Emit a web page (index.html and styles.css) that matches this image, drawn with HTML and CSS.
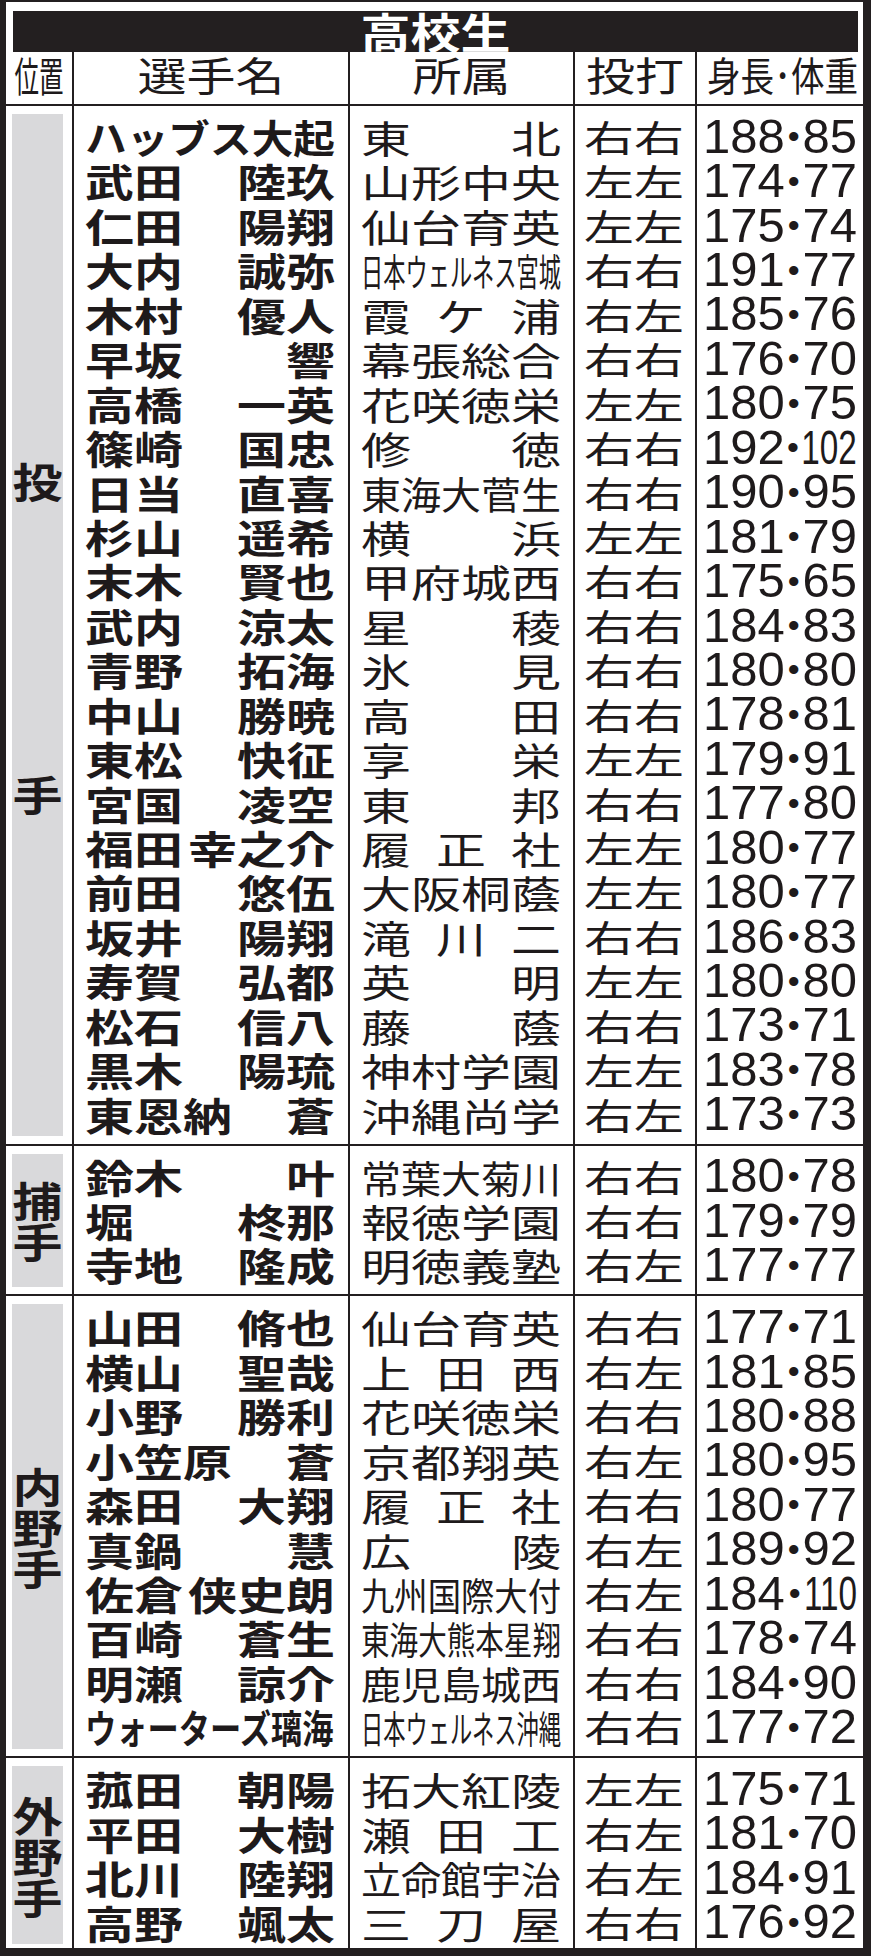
FILE: index.html
```html
<!DOCTYPE html>
<html lang="ja">
<head>
<meta charset="utf-8">
<title>高校生</title>
<link rel="stylesheet" href="styles.css">
</head>
<body>
<div class="frame">
  <div class="title"><span>高校生</span></div>
  <div class="head">
    <div class="c pos"><span class="hpos">位置</span></div>
    <div class="c name"><span class="ht">選手名</span></div>
    <div class="c school"><span class="ht">所属</span></div>
    <div class="c hand"><span class="ht">投打</span></div>
    <div class="c num"><span class="hnum">身長･体重</span></div>
  </div>

  <section class="sec">
    <div class="col pos"><div class="gray pitcher"><span>投</span><span>手</span></div></div>
    <div class="col name">
      <div class="r"><span class="n6">ハッブス大起</span></div>
      <div class="r"><span>武田</span><span>陸玖</span></div>
      <div class="r"><span>仁田</span><span>陽翔</span></div>
      <div class="r"><span>大内</span><span>誠弥</span></div>
      <div class="r"><span>木村</span><span>優人</span></div>
      <div class="r"><span>早坂</span><span>響</span></div>
      <div class="r"><span>高橋</span><span>一英</span></div>
      <div class="r"><span>篠崎</span><span>国忠</span></div>
      <div class="r"><span>日当</span><span>直喜</span></div>
      <div class="r"><span>杉山</span><span>遥希</span></div>
      <div class="r"><span>末木</span><span>賢也</span></div>
      <div class="r"><span>武内</span><span>涼太</span></div>
      <div class="r"><span>青野</span><span>拓海</span></div>
      <div class="r"><span>中山</span><span>勝暁</span></div>
      <div class="r"><span>東松</span><span>快征</span></div>
      <div class="r"><span>宮国</span><span>凌空</span></div>
      <div class="r"><span>福田</span><span>幸之介</span></div>
      <div class="r"><span>前田</span><span>悠伍</span></div>
      <div class="r"><span>坂井</span><span>陽翔</span></div>
      <div class="r"><span>寿賀</span><span>弘都</span></div>
      <div class="r"><span>松石</span><span>信八</span></div>
      <div class="r"><span>黒木</span><span>陽琉</span></div>
      <div class="r"><span>東恩納</span><span>蒼</span></div>
    </div>
    <div class="col school">
      <div class="r"><span>東</span><span>北</span></div>
      <div class="r"><span>山形中央</span></div>
      <div class="r"><span>仙台育英</span></div>
      <div class="r"><span class="s9">日本ウェルネス宮城</span></div>
      <div class="r"><span>霞</span><span>ケ</span><span>浦</span></div>
      <div class="r"><span>幕張総合</span></div>
      <div class="r"><span>花咲徳栄</span></div>
      <div class="r"><span>修</span><span>徳</span></div>
      <div class="r"><span class="s5">東海大菅生</span></div>
      <div class="r"><span>横</span><span>浜</span></div>
      <div class="r"><span>甲府城西</span></div>
      <div class="r"><span>星</span><span>稜</span></div>
      <div class="r"><span>氷</span><span>見</span></div>
      <div class="r"><span>高</span><span>田</span></div>
      <div class="r"><span>享</span><span>栄</span></div>
      <div class="r"><span>東</span><span>邦</span></div>
      <div class="r"><span>履</span><span>正</span><span>社</span></div>
      <div class="r"><span>大阪桐蔭</span></div>
      <div class="r"><span>滝</span><span>川</span><span>二</span></div>
      <div class="r"><span>英</span><span>明</span></div>
      <div class="r"><span>藤</span><span>蔭</span></div>
      <div class="r"><span>神村学園</span></div>
      <div class="r"><span>沖縄尚学</span></div>
    </div>
    <div class="col hand">
      <div class="r">右右</div><div class="r">左左</div><div class="r">左左</div><div class="r">右右</div>
      <div class="r">右左</div><div class="r">右右</div><div class="r">左左</div><div class="r">右右</div>
      <div class="r">右右</div><div class="r">左左</div><div class="r">右右</div><div class="r">右右</div>
      <div class="r">右右</div><div class="r">右右</div><div class="r">左左</div><div class="r">右右</div>
      <div class="r">左左</div><div class="r">左左</div><div class="r">右右</div><div class="r">左左</div>
      <div class="r">右右</div><div class="r">左左</div><div class="r">右左</div>
    </div>
    <div class="col num">
      <div class="r"><span>188</span><span class="dot">•</span><span>85</span></div>
      <div class="r"><span>174</span><span class="dot">•</span><span>77</span></div>
      <div class="r"><span>175</span><span class="dot">•</span><span>74</span></div>
      <div class="r"><span>191</span><span class="dot">•</span><span>77</span></div>
      <div class="r"><span>185</span><span class="dot">•</span><span>76</span></div>
      <div class="r"><span>176</span><span class="dot">•</span><span>70</span></div>
      <div class="r"><span>180</span><span class="dot">•</span><span>75</span></div>
      <div class="r"><span>192</span><span class="dot">•</span><span class="w3">102</span></div>
      <div class="r"><span>190</span><span class="dot">•</span><span>95</span></div>
      <div class="r"><span>181</span><span class="dot">•</span><span>79</span></div>
      <div class="r"><span>175</span><span class="dot">•</span><span>65</span></div>
      <div class="r"><span>184</span><span class="dot">•</span><span>83</span></div>
      <div class="r"><span>180</span><span class="dot">•</span><span>80</span></div>
      <div class="r"><span>178</span><span class="dot">•</span><span>81</span></div>
      <div class="r"><span>179</span><span class="dot">•</span><span>91</span></div>
      <div class="r"><span>177</span><span class="dot">•</span><span>80</span></div>
      <div class="r"><span>180</span><span class="dot">•</span><span>77</span></div>
      <div class="r"><span>180</span><span class="dot">•</span><span>77</span></div>
      <div class="r"><span>186</span><span class="dot">•</span><span>83</span></div>
      <div class="r"><span>180</span><span class="dot">•</span><span>80</span></div>
      <div class="r"><span>173</span><span class="dot">•</span><span>71</span></div>
      <div class="r"><span>183</span><span class="dot">•</span><span>78</span></div>
      <div class="r"><span>173</span><span class="dot">•</span><span>73</span></div>
    </div>
  </section>

  <section class="sec">
    <div class="col pos"><div class="gray"><span>捕</span><span>手</span></div></div>
    <div class="col name">
      <div class="r"><span>鈴木</span><span>叶</span></div>
      <div class="r"><span>堀</span><span>柊那</span></div>
      <div class="r"><span>寺地</span><span>隆成</span></div>
    </div>
    <div class="col school">
      <div class="r"><span class="s5">常葉大菊川</span></div>
      <div class="r"><span>報徳学園</span></div>
      <div class="r"><span>明徳義塾</span></div>
    </div>
    <div class="col hand">
      <div class="r">右右</div><div class="r">右右</div><div class="r">右左</div>
    </div>
    <div class="col num">
      <div class="r"><span>180</span><span class="dot">•</span><span>78</span></div>
      <div class="r"><span>179</span><span class="dot">•</span><span>79</span></div>
      <div class="r"><span>177</span><span class="dot">•</span><span>77</span></div>
    </div>
  </section>

  <section class="sec">
    <div class="col pos"><div class="gray"><span>内</span><span>野</span><span>手</span></div></div>
    <div class="col name">
      <div class="r"><span>山田</span><span>脩也</span></div>
      <div class="r"><span>横山</span><span>聖哉</span></div>
      <div class="r"><span>小野</span><span>勝利</span></div>
      <div class="r"><span>小笠原</span><span>蒼</span></div>
      <div class="r"><span>森田</span><span>大翔</span></div>
      <div class="r"><span>真鍋</span><span>慧</span></div>
      <div class="r"><span>佐倉</span><span>侠史朗</span></div>
      <div class="r"><span>百崎</span><span>蒼生</span></div>
      <div class="r"><span>明瀬</span><span>諒介</span></div>
      <div class="r"><span class="n8">ウォーターズ璃海</span></div>
    </div>
    <div class="col school">
      <div class="r"><span>仙台育英</span></div>
      <div class="r"><span>上</span><span>田</span><span>西</span></div>
      <div class="r"><span>花咲徳栄</span></div>
      <div class="r"><span>京都翔英</span></div>
      <div class="r"><span>履</span><span>正</span><span>社</span></div>
      <div class="r"><span>広</span><span>陵</span></div>
      <div class="r"><span class="s6">九州国際大付</span></div>
      <div class="r"><span class="s7">東海大熊本星翔</span></div>
      <div class="r"><span class="s5">鹿児島城西</span></div>
      <div class="r"><span class="s9">日本ウェルネス沖縄</span></div>
    </div>
    <div class="col hand">
      <div class="r">右右</div><div class="r">右左</div><div class="r">右右</div><div class="r">右左</div>
      <div class="r">右右</div><div class="r">右左</div><div class="r">右左</div><div class="r">右右</div>
      <div class="r">右右</div><div class="r">右右</div>
    </div>
    <div class="col num">
      <div class="r"><span>177</span><span class="dot">•</span><span>71</span></div>
      <div class="r"><span>181</span><span class="dot">•</span><span>85</span></div>
      <div class="r"><span>180</span><span class="dot">•</span><span>88</span></div>
      <div class="r"><span>180</span><span class="dot">•</span><span>95</span></div>
      <div class="r"><span>180</span><span class="dot">•</span><span>77</span></div>
      <div class="r"><span>189</span><span class="dot">•</span><span>92</span></div>
      <div class="r"><span>184</span><span class="dot">•</span><span class="w3">110</span></div>
      <div class="r"><span>178</span><span class="dot">•</span><span>74</span></div>
      <div class="r"><span>184</span><span class="dot">•</span><span>90</span></div>
      <div class="r"><span>177</span><span class="dot">•</span><span>72</span></div>
    </div>
  </section>

  <section class="sec last">
    <div class="col pos"><div class="gray"><span>外</span><span>野</span><span>手</span></div></div>
    <div class="col name">
      <div class="r"><span>菰田</span><span>朝陽</span></div>
      <div class="r"><span>平田</span><span>大樹</span></div>
      <div class="r"><span>北川</span><span>陸翔</span></div>
      <div class="r"><span>高野</span><span>颯太</span></div>
    </div>
    <div class="col school">
      <div class="r"><span>拓大紅陵</span></div>
      <div class="r"><span>瀬</span><span>田</span><span>工</span></div>
      <div class="r"><span class="s5">立命館宇治</span></div>
      <div class="r"><span>三</span><span>刀</span><span>屋</span></div>
    </div>
    <div class="col hand">
      <div class="r">左左</div><div class="r">右左</div><div class="r">右左</div><div class="r">右右</div>
    </div>
    <div class="col num">
      <div class="r"><span>175</span><span class="dot">•</span><span>71</span></div>
      <div class="r"><span>181</span><span class="dot">•</span><span>70</span></div>
      <div class="r"><span>184</span><span class="dot">•</span><span>91</span></div>
      <div class="r"><span>176</span><span class="dot">•</span><span>92</span></div>
    </div>
  </section>
</div>
</body>
</html>
```

FILE: styles.css
```css
* { box-sizing: border-box; margin: 0; padding: 0; }
html, body { background: #ffffff; }
body {
  margin: 0;
  font-family: "Noto Sans CJK JP", "Noto Sans CJK SC", sans-serif;
  color: #1e1a1b;
}

.frame {
  width: 871px;
  height: 1956px;
  border-style: solid;
  border-color: #231f20;
  border-width: 2px 8px 8px 6px;
  overflow: hidden;
  white-space: nowrap;
}

.title {
  margin: 9px 5px 0 7px;
  height: 41px;
  background: #231f20;
  color: #ffffff;
  display: flex;
  justify-content: center;
  align-items: center;
  font-size: 50px;
  font-weight: 700;
  line-height: 41px;
}
.title span { display: inline-block; transform: scaleY(0.83); }

.head, .sec { display: flex; border-bottom: 2px solid #231f20; }
.sec.last { border-bottom: none; }
.head { height: 54px; }

.c, .col { flex: none; border-right: 2px solid #231f20; }
.pos { width: 68px; }
.name { width: 276px; }
.school { width: 225px; }
.hand { width: 122px; }
.num { flex: 1; border-right: none; }

.head .c {
  display: flex;
  align-items: center;
  justify-content: center;
  font-size: 49px;
  font-weight: 400;
  line-height: 1;
  padding-bottom: 9px;
}
.head .ht { display: inline-block; transform: scaleY(0.82); }
.head .hpos {
  display: inline-block;
  margin: 0 -16px;
  transform: scale(0.5, 0.84);
}
.head .num { justify-content: flex-start; padding-left: 10px; }
.head .hnum {
  display: inline-block;
  margin-right: -70px;
  transform: scale(0.685, 0.82);
  transform-origin: 0 50%;
}

.col { padding: 8px 0 7.5px; }
.sec.last .col { padding-bottom: 3.5px; }
.col.pos { display: flex; flex-direction: column; padding-left: 6px; padding-right: 9px; }

.gray {
  flex: 1;
  background: #d9d9db;
  display: flex;
  flex-direction: column;
  align-items: center;
  justify-content: center;
  font-size: 50px;
  font-weight: 700;
  line-height: 41px;
}
.gray span { display: block; transform: scaleY(0.82); }
.gray.pitcher { gap: 272px; padding-top: 23px; }

.r {
  height: 44.45px;
  display: flex;
  align-items: center;
  line-height: 1;
}

.name .r {
  padding: 0 13px 0 11px;
  justify-content: space-between;
  font-size: 49px;
  font-weight: 700;
  transform: scaleY(0.78);
}
.n6 { display: inline-block; transform: scaleX(0.8503); transform-origin: 0 50%; margin-right: -44px; }
.n8 { display: inline-block; transform: scaleX(0.6378); transform-origin: 0 50%; margin-right: -142px; }

.school .r {
  padding: 0 12px 0 11px;
  justify-content: space-between;
  font-size: 50px;
  font-weight: 400;
  transform: scaleY(0.75);
}
.s5 { display: inline-block; transform: scaleX(0.8); transform-origin: 0 50%; margin-right: -50px; }
.s6 { display: inline-block; transform: scaleX(0.6667); transform-origin: 0 50%; margin-right: -100px; }
.s7 { display: inline-block; transform: scaleX(0.5714); transform-origin: 0 50%; margin-right: -150px; }
.s9 { display: inline-block; transform: scaleX(0.4444); transform-origin: 0 50%; margin-right: -250px; }

.hand .r {
  padding-left: 9px;
  font-size: 50px;
  font-weight: 400;
  transform: scaleY(0.73);
}

.num .r {
  padding: 0 6px;
  justify-content: space-between;
  font-family: "Liberation Sans", Arial, sans-serif;
  font-size: 49px;
}
.dot { display: inline-block; font-size: 34px; }
.w3 { display: inline-block; transform: scaleX(0.68); transform-origin: 100% 50%; margin-left: -26px; }
```
